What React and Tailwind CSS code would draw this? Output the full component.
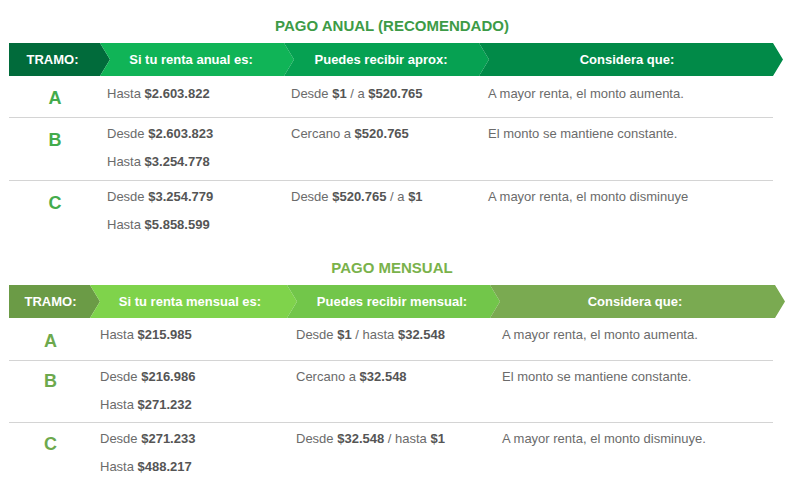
import React from 'react';

// Chevron band segments: first has no left notch, rest overlap the previous tip by 10px
const firstClip = '[clip-path:polygon(0_0,calc(100%-10px)_0,100%_50%,calc(100%-10px)_100%,0_100%)]';
const restClip = '[clip-path:polygon(0_0,calc(100%-10px)_0,100%_50%,calc(100%-10px)_100%,0_100%,10px_50%)]';

const Money = ({ parts }) => (
    <span>
        {parts.map((p, i) =>
            i % 2 === 1 ? <b key={i} className="font-bold text-[#555555]">{p}</b> : <span key={i}>{p}</span>
        )}
    </span>
);

const annual = {
    title: 'PAGO ANUAL (RECOMENDADO)',
    titleColor: 'text-[#3d9b47]',
    letterColor: 'text-[#43ab4c]',
    cols: 'grid-cols-[98px_184px_197px_1fr]',
    letterPad: 'pr-[6px]',
    segs: [
        { label: 'TRAMO:', w: 'w-[101px]', bg: 'bg-[#016b3b]', pad: 'pr-[14px]' },
        { label: 'Si tu renta anual es:', w: 'w-[194px]', bg: 'bg-[#10b457]', pad: 'pl-[4px] pr-[16px]' },
        { label: 'Puedes recibir aprox:', w: 'w-[205px]', bg: 'bg-[#06a152]', pad: 'pl-[4px] pr-[15px]' },
        { label: 'Considera que:', w: 'w-[304px]', bg: 'bg-[#018a48]', pad: 'pl-[6px] pr-[14px]' },
    ],
    rows: [
        { l: 'A', a: [['Hasta ', '$2.603.822']], b: ['Desde ', '$1', ' / a ', '$520.765'], c: 'A mayor renta, el monto aumenta.' },
        { l: 'B', a: [['Desde ', '$2.603.823'], ['Hasta ', '$3.254.778']], b: ['Cercano a ', '$520.765'], c: 'El monto se mantiene constante.' },
        { l: 'C', a: [['Desde ', '$3.254.779'], ['Hasta ', '$5.858.599']], b: ['Desde ', '$520.765', ' / a ', '$1'], c: 'A mayor renta, el monto disminuye' },
    ],
};

const monthly = {
    title: 'PAGO MENSUAL',
    titleColor: 'text-[#7ab24b]',
    letterColor: 'text-[#6da94d]',
    cols: 'grid-cols-[91px_196px_206px_1fr]',
    letterPad: 'pr-[8px]',
    segs: [
        { label: 'TRAMO:', w: 'w-[91px]', bg: 'bg-[#6b9b46]', pad: 'pr-[8px]' },
        { label: 'Si tu renta mensual es:', w: 'w-[207px]', bg: 'bg-[#7fd34b]', pad: 'pl-[6px] pr-[13px]' },
        { label: 'Puedes recibir mensual:', w: 'w-[213px]', bg: 'bg-[#72c64a]', pad: 'pl-[8px] pr-[11px]' },
        { label: 'Considera que:', w: 'w-[295px]', bg: 'bg-[#7aaa51]', pad: 'pl-[8px] pr-[13px]' },
    ],
    rows: [
        { l: 'A', a: [['Hasta ', '$215.985']], b: ['Desde ', '$1', ' / hasta ', '$32.548'], c: 'A mayor renta, el monto aumenta.' },
        { l: 'B', a: [['Desde ', '$216.986'], ['Hasta ', '$271.232']], b: ['Cercano a ', '$32.548'], c: 'El monto se mantiene constante.' },
        { l: 'C', a: [['Desde ', '$271.233'], ['Hasta ', '$488.217']], b: ['Desde ', '$32.548', ' / hasta ', '$1'], c: 'A mayor renta, el monto disminuye.' },
    ],
};

const Section = ({ data, rowH, textPt, letterPt, titleMt }) => (
    <div>
        <div className={`${titleMt} h-[20px] pr-[16px] leading-[20px] text-center text-[15px] font-bold ${data.titleColor}`}>
            {data.title}
        </div>
        {/* header band */}
        <div className="mt-[7px] flex h-[33px] pl-[9px]">
            {data.segs.map((s, i) => (
                <div
                    key={i}
                    className={`${s.w} ${s.bg} ${i === 0 ? firstClip : `${restClip} -ml-[10px]`} ${s.pad} flex items-center justify-center text-[13px] font-bold text-white`}
                >
                    {s.label}
                </div>
            ))}
        </div>
        {/* rows */}
        <div className="ml-[9px] w-[764px]">
            {data.rows.map((r, i) => (
                <div
                    key={r.l}
                    className={`grid ${data.cols} ${rowH[i]} ${i < 2 ? 'border-b border-[#d4d4d4]' : ''} text-[13px] leading-[28px] text-[#6b6b6b]`}
                >
                    <div className={`${letterPt[i]} ${data.letterPad} text-center text-[18px] font-bold ${data.letterColor}`}>{r.l}</div>
                    <div className={textPt[i]}>
                        {r.a.map((line, j) => (
                            <div key={j}><Money parts={line} /></div>
                        ))}
                    </div>
                    <div className={textPt[i]}><Money parts={r.b} /></div>
                    <div className={textPt[i]}>{r.c}</div>
                </div>
            ))}
        </div>
    </div>
);

export default function App() {
    return (
        <div className="w-[800px] h-[481px] overflow-hidden bg-white font-['Liberation_Sans',Arial,sans-serif]">
            <Section
                data={annual}
                titleMt="mt-[16px]"
                rowH={['h-[42px]', 'h-[63px]', 'h-[62px]']}
                textPt={['pt-[4px]', 'pt-[2px]', 'pt-[2px]']}
                letterPt={['pt-[8px]', 'pt-[8px]', 'pt-[8px]']}
            />
            <Section
                data={monthly}
                titleMt="mt-[15px]"
                rowH={['h-[43px]', 'h-[62px]', 'h-[62px]']}
                textPt={['pt-[3px]', 'pt-[2px]', 'pt-[2px]']}
                letterPt={['pt-[9px]', 'pt-[6px]', 'pt-[7px]']}
            />
        </div>
    );
}
